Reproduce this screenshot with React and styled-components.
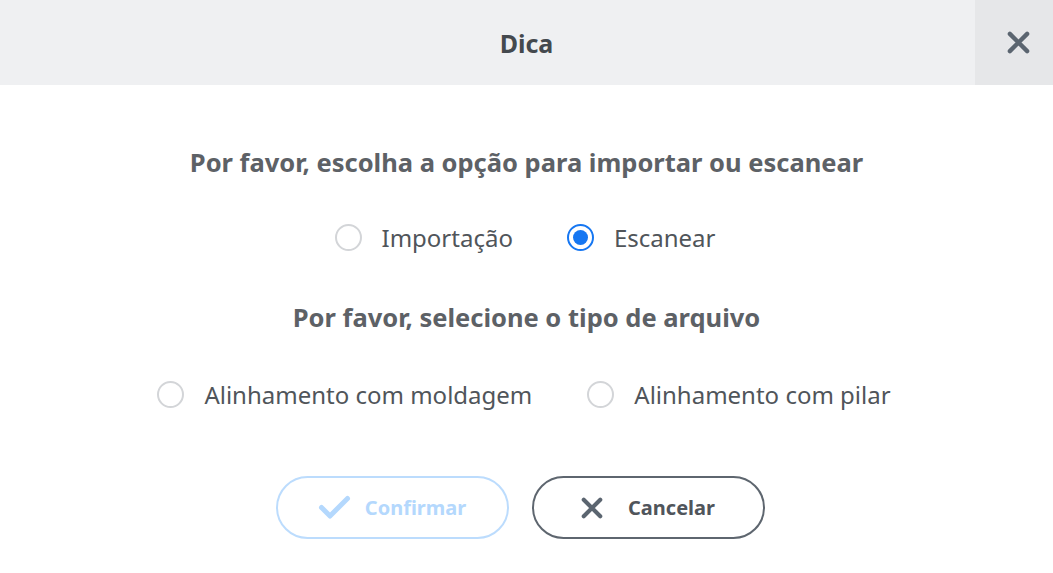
import React, { useState } from "react";
import styled, { createGlobalStyle } from "styled-components";

const GlobalStyle = createGlobalStyle`
  html, body {
    margin: 0;
    padding: 0;
    background: #fff;
    font-family: "Noto Sans", "Open Sans", sans-serif;
  }
`;

const Dialog = styled.div`
  width: 1053px;
  height: 573px;
  background: #fff;
  display: flex;
  flex-direction: column;
`;

const Header = styled.div`
  height: 85px;
  background: #eff0f2;
  display: flex;
  align-items: stretch;
`;

const Title = styled.div`
  flex: 1;
  display: flex;
  align-items: center;
  justify-content: center;
  font-size: 25px;
  font-weight: 700;
  color: #44494e;
  padding-left: 78px;
`;

const CloseButton = styled.button`
  width: 78px;
  border: none;
  background: #e6e7e9;
  display: flex;
  align-items: center;
  justify-content: center;
  padding: 0 0 0 8px;
  cursor: pointer;
`;

const Body = styled.div`
  display: flex;
  flex-direction: column;
  align-items: center;
  padding-top: 59px;
`;

const Heading = styled.div`
  font-size: 25.5px;
  font-weight: 700;
  color: #5d6166;
  line-height: 36px;
  height: 36px;
  margin-bottom: ${(p) => p.$gap}px;
`;

const RadioRow = styled.div`
  display: flex;
  align-items: center;
  gap: ${(p) => p.$gap}px;
  height: 40px;
  margin-right: ${(p) => p.$shift}px;
  margin-bottom: ${(p) => p.$after}px;
`;

const RadioLabel = styled.label`
  display: flex;
  align-items: center;
  gap: 20px;
  font-size: 24px;
  color: #50555a;
  cursor: pointer;
`;

const Circle = styled.span`
  width: 27px;
  height: 27px;
  box-sizing: border-box;
  border-radius: 50%;
  border: 2px solid ${(p) => (p.$checked ? "#1677f2" : "#d3d5d8")};
  display: flex;
  align-items: center;
  justify-content: center;

  &::after {
    content: "";
    width: 15px;
    height: 15px;
    border-radius: 50%;
    background: #1677f2;
    display: ${(p) => (p.$checked ? "block" : "none")};
  }
`;

const Buttons = styled.div`
  display: flex;
  gap: 23px;
  margin-right: 13px;
`;

const Button = styled.button`
  width: 233px;
  height: 63px;
  box-sizing: border-box;
  border-radius: 32px;
  background: #fff;
  border: 2px solid ${(p) => (p.$disabled ? "#bcdcfd" : "#5e666f")};
  color: ${(p) => (p.$disabled ? "#b4d8fd" : "#50555b")};
  font-family: inherit;
  font-size: 20px;
  font-weight: 700;
  display: flex;
  align-items: center;
  justify-content: center;
  gap: ${(p) => p.$gap}px;
  cursor: ${(p) => (p.$disabled ? "default" : "pointer")};
`;

const Radio = ({ checked, label, onClick }) => (
  <RadioLabel onClick={onClick}>
    <Circle $checked={checked} />
    {label}
  </RadioLabel>
);

const XIcon = ({ size, color, stroke }) => (
  <svg width={size} height={size} viewBox="0 0 24 24">
    <path d="M3 3L21 21M21 3L3 21" stroke={color} strokeWidth={stroke} strokeLinecap="round" />
  </svg>
);

const CheckIcon = () => (
  <svg width="33" height="25" viewBox="0 0 33 25">
    <path d="M3.5 12.5L12 21L29.5 3.5" fill="none" stroke="#b4d8fd" strokeWidth="5" strokeLinecap="round" strokeLinejoin="round" />
  </svg>
);

export default function App() {
  const [mode, setMode] = useState("scan");
  const [type, setType] = useState(null);

  return (
    <Dialog>
      <GlobalStyle />
      <Header>
        <Title>Dica</Title>
        <CloseButton>
          <XIcon size={23} color="#5b6570" stroke={4.5} />
        </CloseButton>
      </Header>
      <Body>
        <Heading $gap={37}>Por favor, escolha a opção para importar ou escanear</Heading>
        <RadioRow $gap={54} $after={42} $shift={3}>
          <Radio checked={mode === "import"} label="Importação" onClick={() => setMode("import")} />
          <Radio checked={mode === "scan"} label="Escanear" onClick={() => setMode("scan")} />
        </RadioRow>
        <Heading $gap={39}>Por favor, selecione o tipo de arquivo</Heading>
        <RadioRow $gap={55} $after={62} $shift={5}>
          <Radio checked={type === "mold"} label="Alinhamento com moldagem" onClick={() => setType("mold")} />
          <Radio checked={type === "pillar"} label="Alinhamento com pilar" onClick={() => setType("pillar")} />
        </RadioRow>
        <Buttons>
          <Button $disabled $gap={14}>
            <CheckIcon />
            Confirmar
          </Button>
          <Button $gap={25}>
            <XIcon size={22} color="#5b6570" stroke={4.5} />
            Cancelar
          </Button>
        </Buttons>
      </Body>
    </Dialog>
  );
}
